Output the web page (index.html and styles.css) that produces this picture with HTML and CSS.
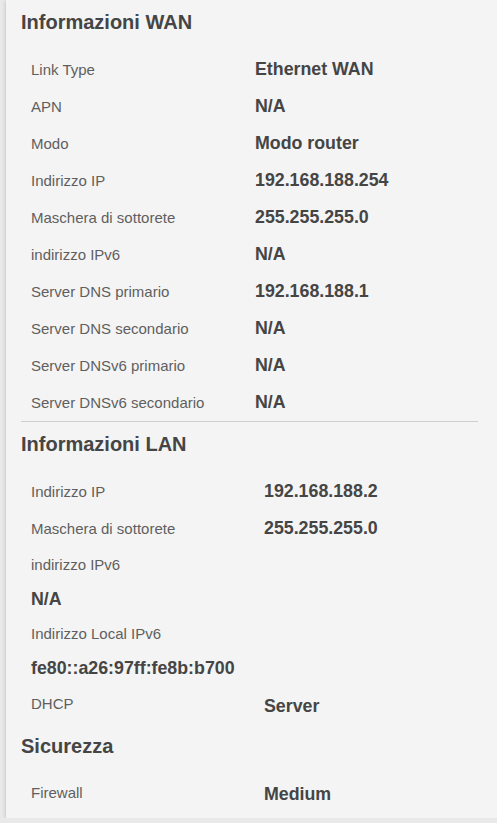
FILE: index.html
```html
<!DOCTYPE html>
<html lang="it">
<head>
<meta charset="utf-8">
<title>Informazioni</title>
<link rel="stylesheet" href="styles.css">
</head>
<body>
<div class="card">
  <section class="section">
    <h2 class="heading heading-first">Informazioni WAN</h2>
    <div class="rows rows-wan">
      <div class="row"><span class="label">Link Type</span><span class="value">Ethernet WAN</span></div>
      <div class="row"><span class="label">APN</span><span class="value">N/A</span></div>
      <div class="row"><span class="label">Modo</span><span class="value">Modo router</span></div>
      <div class="row"><span class="label">Indirizzo IP</span><span class="value">192.168.188.254</span></div>
      <div class="row"><span class="label">Maschera di sottorete</span><span class="value">255.255.255.0</span></div>
      <div class="row"><span class="label">indirizzo IPv6</span><span class="value">N/A</span></div>
      <div class="row"><span class="label">Server DNS primario</span><span class="value">192.168.188.1</span></div>
      <div class="row"><span class="label">Server DNS secondario</span><span class="value">N/A</span></div>
      <div class="row"><span class="label">Server DNSv6 primario</span><span class="value">N/A</span></div>
      <div class="row"><span class="label">Server DNSv6 secondario</span><span class="value">N/A</span></div>
    </div>
    <div class="divider"></div>
  </section>

  <section class="section">
    <h2 class="heading">Informazioni LAN</h2>
    <div class="rows rows-lan">
      <div class="row"><span class="label">Indirizzo IP</span><span class="value">192.168.188.2</span></div>
      <div class="row"><span class="label">Maschera di sottorete</span><span class="value">255.255.255.0</span></div>
    </div>
    <div class="stack">
      <div class="stack-label">indirizzo IPv6</div>
      <div class="stack-value">N/A</div>
      <div class="stack-label">Indirizzo Local IPv6</div>
      <div class="stack-value">fe80::a26:97ff:fe8b:b700</div>
    </div>
    <div class="rows rows-lan">
      <div class="row row-low"><span class="label">DHCP</span><span class="value">Server</span></div>
    </div>
  </section>

  <section class="section">
    <h2 class="heading heading-sec">Sicurezza</h2>
    <div class="rows rows-lan">
      <div class="row row-firewall"><span class="label">Firewall</span><span class="value">Medium</span></div>
    </div>
  </section>
</div>
</body>
</html>
```

FILE: styles.css
```css
html, body {
  margin: 0;
  padding: 0;
}

body {
  background: #e9e9e9;
  font-family: "Liberation Sans", Arial, sans-serif;
  overflow: hidden;
  width: 497px;
}

.card {
  display: flow-root;
  margin-left: 6px;
  width: 491px;
  box-sizing: border-box;
  background: #f4f4f4;
  padding: 0 19px 6px 15px;
  box-shadow: 0 1px 4px rgba(0, 0, 0, 0.22);
}

.heading {
  margin: 6px 0 13px 0;
  height: 32px;
  line-height: 32px;
  font-size: 20px;
  font-weight: bold;
  color: #454545;
}

.heading-sec {
  margin-top: 7.5px;
}

.rows {
  display: flex;
  flex-direction: column;
}

.row {
  display: grid;
  align-items: center;
  height: 37px;
  padding-left: 10px;
}

.rows-wan .row {
  grid-template-columns: 224px 1fr;
}

.rows-lan .row {
  grid-template-columns: 233px 1fr;
}

.label {
  font-size: 15px;
  line-height: 18px;
  color: #5f5f5f;
}

.value {
  font-size: 17.8px;
  line-height: 21px;
  font-weight: bold;
  color: #454545;
}

.row-low .value {
  margin-top: 5px;
}

.row-firewall .value {
  margin-top: 3px;
}

.divider {
  border-top: 1px solid #cfcfcf;
  margin-bottom: 1px;
}

.stack {
  padding-left: 10px;
}

.stack-label {
  height: 35px;
  line-height: 35px;
  font-size: 15px;
  color: #5f5f5f;
}

.stack-value {
  height: 34px;
  line-height: 34px;
  font-size: 17.8px;
  font-weight: bold;
  color: #454545;
}
```
